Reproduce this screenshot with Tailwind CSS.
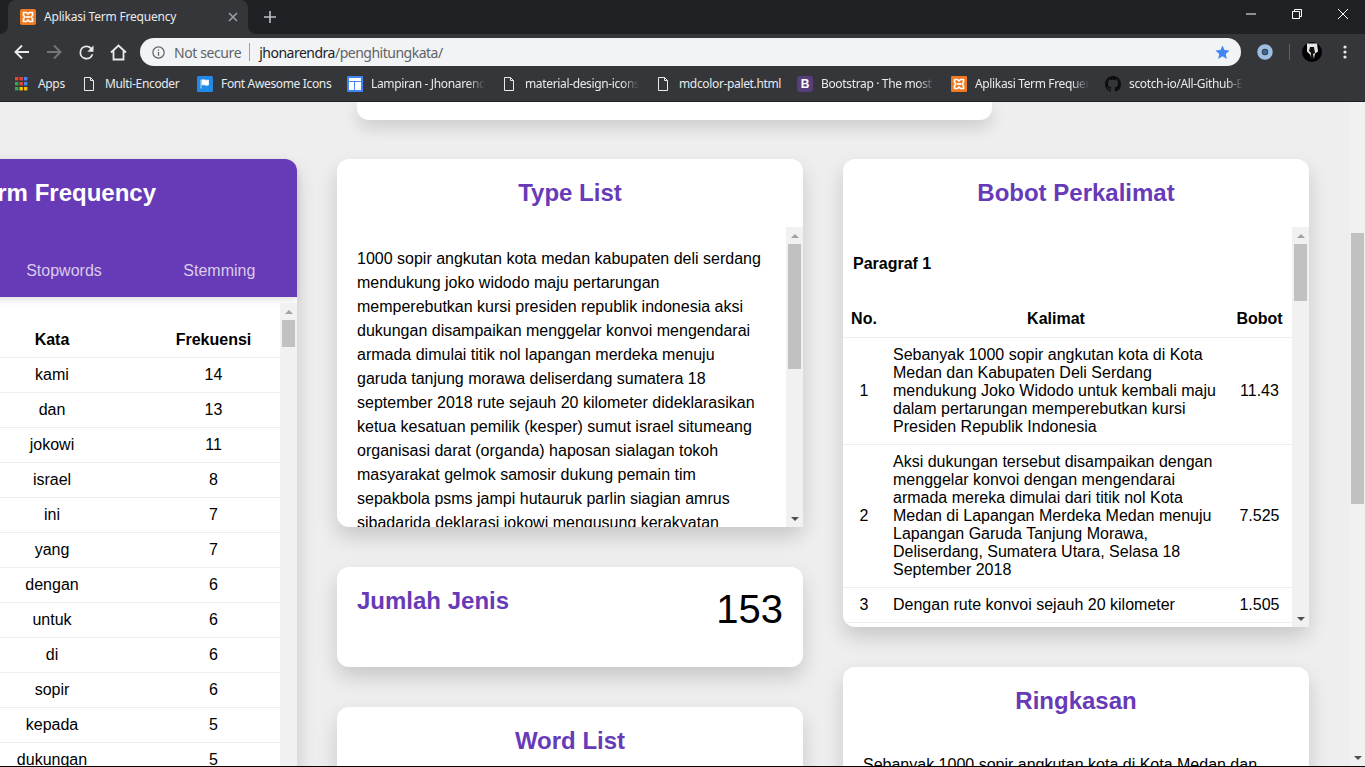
<!DOCTYPE html>
<html lang="en">

<head>
    <meta charset="UTF-8">
    <meta name="viewport" content="width=device-width, initial-scale=1.0">
    <title>Aplikasi Term Frequency</title>
    <script src="https://cdn.jsdelivr.net/npm/@tailwindcss/browser@4"></script>
</head>

<body class="h-[767px] overflow-hidden bg-[#eeeeee] font-['Liberation_Sans',sans-serif] text-black">

    <!-- Browser chrome -->
    <header class="h-[102px] bg-[#35363a] border-b border-[#202124] font-['Noto_Sans',sans-serif] text-[#e8eaed]">
        <!-- Tab strip -->
        <div class="h-[34px] bg-[#202124] flex items-stretch pl-2">
            <div class="relative w-[240px] bg-[#35363a] rounded-t-lg flex items-center pl-3 pr-2.5">
                <div class="absolute -left-2 bottom-0 w-2 h-2 bg-[#35363a]"><div class="w-2 h-2 bg-[#202124] rounded-br-lg"></div></div>
                <div class="absolute -right-2 bottom-0 w-2 h-2 bg-[#35363a]"><div class="w-2 h-2 bg-[#202124] rounded-bl-lg"></div></div>
                <svg class="w-4 h-4 shrink-0" viewBox="0 0 16 16"><rect width="16" height="16" rx="2" fill="#ef7a22"/><path d="M3.5 3.5h3L8 5l1.5-1.5h3v3L11 8l1.5 1.5v3h-3L8 11l-1.5 1.5h-3v-3L5 8 3.5 6.5z" fill="none" stroke="#fff" stroke-width="1.7" stroke-linejoin="round"/><path d="M6 8h4" stroke="#fff" stroke-width="1.7"/></svg>
                <span class="ml-2 text-[12px] tracking-[-0.2px] flex-1 whitespace-nowrap">Aplikasi Term Frequency</span>
                <svg class="w-2.5 h-2.5" viewBox="0 0 10 10"><path d="M1 1l8 8M9 1l-8 8" stroke="#9aa0a6" stroke-width="1.6"/></svg>
            </div>
            <div class="ml-4 flex items-center">
                <svg class="w-3 h-3" viewBox="0 0 12 12"><path d="M6 0v12M0 6h12" stroke="#bdc1c6" stroke-width="1.6"/></svg>
            </div>
            <div class="ml-auto flex">
                <div class="w-[46px] h-7 flex items-center justify-center"><svg class="w-2.5 h-2.5" viewBox="0 0 10 10"><path d="M0 5h10" stroke="#fff"/></svg></div>
                <div class="w-[46px] h-7 flex items-center justify-center"><svg class="w-2.5 h-2.5" viewBox="0 0 10 10"><path d="M.5 2.5h7v7h-7zM2.5 2.5v-2h7v7h-2" fill="none" stroke="#fff"/></svg></div>
                <div class="w-[45px] h-7 flex items-center justify-center"><svg class="w-2.5 h-2.5" viewBox="0 0 10 10"><path d="M0 0l10 10M10 0L0 10" stroke="#fff"/></svg></div>
            </div>
        </div>

        <!-- Toolbar -->
        <div class="h-8 pt-1 flex items-center pl-1.5">
            <div class="w-8 h-7 flex items-center justify-center"><svg class="w-4 h-4" viewBox="0 0 16 16"><path d="M15 8H2M8 1.5L1.5 8 8 14.5" fill="none" stroke="#e8eaed" stroke-width="1.9"/></svg></div>
            <div class="w-8 h-7 flex items-center justify-center"><svg class="w-4 h-4" viewBox="0 0 16 16"><path d="M1 8h13M8 1.5L14.5 8 8 14.5" fill="none" stroke="#74777a" stroke-width="1.9"/></svg></div>
            <div class="w-8 h-7 flex items-center justify-center"><svg class="w-[21px] h-[21px]" viewBox="0 0 24 24"><path d="M17.65 6.35A7.96 7.96 0 0 0 12 4a8 8 0 1 0 7.73 10h-2.08A6 6 0 1 1 12 6c1.66 0 3.14.69 4.22 1.78L13 11h7V4z" fill="#e8eaed"/></svg></div>
            <div class="w-8 h-7 flex items-center justify-center"><svg class="w-[17px] h-[17px]" viewBox="0 0 17 17"><path d="M1 8.5L8.500 1.500 16 8.500M3.500 7v8.500h10V7" fill="none" stroke="#e8eaed" stroke-width="1.8"/></svg></div>
            <div class="ml-1.5 flex-1 h-7 rounded-full bg-[#f1f3f4] flex items-center pl-[11px] pr-[10px] text-[14px]">
                <svg class="w-[15px] h-[15px] shrink-0" viewBox="0 0 24 24"><path d="M11 7h2v2h-2zm0 4h2v6h-2zm1-9a10 10 0 1 0 0 20 10 10 0 0 0 0-20zm0 18a8 8 0 1 1 0-16 8 8 0 0 1 0 16z" fill="#5f6368"/></svg>
                <span class="ml-[8px] text-[#5f6368] tracking-[-0.4px] whitespace-nowrap">Not secure</span>
                <span class="ml-[8px] w-px h-[18px] bg-[#9aa0a6]"></span>
                <span class="ml-[9px] text-[#202124] tracking-[-0.5px] whitespace-nowrap">jhonarendra<span class="text-[#5f6368]">/penghitungkata/</span></span>
                <svg class="ml-auto w-[17px] h-[17px]" viewBox="0 0 24 24"><path d="M12 17.27L18.18 21l-1.64-7.03L22 9.24l-7.19-.61L12 2 9.19 8.63 2 9.24l5.46 4.73L5.82 21z" fill="#4285f4"/></svg>
            </div>
            <div class="w-[124px] shrink-0 flex items-center pl-4">
                <svg class="w-4 h-4 shrink-0" viewBox="0 0 16 16"><circle cx="8" cy="8" r="5.500" fill="none" stroke="#9dc0e2" stroke-width="4.500"/><circle cx="8" cy="8" r="2.500" fill="#3f6490"/></svg>
                <span class="ml-4 w-px h-4 bg-[#5f6368]"></span>
                <svg class="ml-3 w-5 h-5 shrink-0" viewBox="0 0 20 20"><circle cx="10" cy="10" r="10" fill="#000"/><path d="M5 1.500h10l1 8-3 2-1 5H9l-1-4-3-3z" fill="#e6e6e6"/><path d="M8 5h4l1 6-2 1 1 5H8l1-6-2-2z" fill="#111"/></svg>
                <svg class="ml-[21px] w-1 h-4 shrink-0" viewBox="0 0 4 16"><circle cx="2" cy="3" r="1.600" fill="#e8eaed"/><circle cx="2" cy="8" r="1.600" fill="#e8eaed"/><circle cx="2" cy="13" r="1.600" fill="#e8eaed"/></svg>
            </div>
        </div>

        <!-- Bookmarks bar -->
        <div class="h-[35px] flex items-center pl-3.5 text-[12px] tracking-[-0.35px] whitespace-nowrap">
            <div class="w-[67px] flex items-center gap-2">
                <svg class="w-4 h-4 shrink-0" viewBox="0 0 16 16"><rect x="1" y="1" width="3.400" height="3.400" fill="#ea4335"/><rect x="5.500" y="1" width="3.400" height="3.400" fill="#ea4335"/><rect x="10" y="1" width="3.400" height="3.400" fill="#4285f4"/><rect x="1" y="6" width="3.400" height="3.400" fill="#34a853"/><rect x="5.500" y="6" width="3.400" height="3.400" fill="#ea4335"/><rect x="10" y="6" width="3.400" height="3.400" fill="#4285f4"/><rect x="1" y="11" width="3.400" height="3.400" fill="#34a853"/><rect x="5.500" y="11" width="3.400" height="3.400" fill="#fbbc05"/><rect x="10" y="11" width="3.400" height="3.400" fill="#fbbc05"/></svg>
                <span>Apps</span>
            </div>
            <div class="w-[116px] flex items-center gap-2">
                <svg class="w-4 h-4 shrink-0" viewBox="0 0 16 16"><path d="M3.500 1.500h6l3 3v10h-9zM9.500 1.500v3h3" fill="none" stroke="#e8eaed"/></svg>
                <span>Multi-Encoder</span>
            </div>
            <div class="w-[150px] flex items-center gap-2">
                <svg class="w-4 h-4 shrink-0" viewBox="0 0 16 16"><rect width="16" height="16" rx="1.500" fill="#228ae6"/><path d="M4 3.500v9M5 4c2-1 3 1 6.500 0v5c-3 1-4.500-1-6.500 0z" fill="#fff" stroke="#fff" stroke-width=".7"/></svg>
                <span>Font Awesome Icons</span>
            </div>
            <div class="w-[154px] flex items-center gap-2">
                <svg class="w-4 h-4 shrink-0" viewBox="0 0 16 16"><rect width="16" height="16" rx="1" fill="#4285f4"/><rect x="2" y="2" width="12" height="3" fill="#fff"/><rect x="2" y="6" width="5" height="8" fill="#fff"/><rect x="8" y="6" width="6" height="8" fill="#fff"/></svg>
                <span class="w-[114px] overflow-hidden [mask-image:linear-gradient(to_right,black_85%,transparent)]">Lampiran - Jhonarendra</span>
            </div>
            <div class="w-[154px] flex items-center gap-2">
                <svg class="w-4 h-4 shrink-0" viewBox="0 0 16 16"><path d="M3.500 1.500h6l3 3v10h-9zM9.500 1.500v3h3" fill="none" stroke="#e8eaed"/></svg>
                <span class="w-[114px] overflow-hidden [mask-image:linear-gradient(to_right,black_85%,transparent)]">material-design-icons</span>
            </div>
            <div class="w-[142px] flex items-center gap-2">
                <svg class="w-4 h-4 shrink-0" viewBox="0 0 16 16"><path d="M3.500 1.500h6l3 3v10h-9zM9.500 1.500v3h3" fill="none" stroke="#e8eaed"/></svg>
                <span>mdcolor-palet.html</span>
            </div>
            <div class="w-[154px] flex items-center gap-2">
                <span class="w-4 h-4 shrink-0 rounded-[3px] bg-[#563d7c] text-white text-[12px] leading-4 font-bold text-center font-['Liberation_Sans',sans-serif]">B</span>
                <span class="w-[114px] overflow-hidden [mask-image:linear-gradient(to_right,black_85%,transparent)]">Bootstrap · The most popular</span>
            </div>
            <div class="w-[154px] flex items-center gap-2">
                <svg class="w-4 h-4 shrink-0" viewBox="0 0 16 16"><rect width="16" height="16" rx="1" fill="#ef7a22"/><path d="M3.500 3.500h3L8 5l1.500-1.500h3v3L11 8l1.500 1.500v3h-3L8 11l-1.500 1.500h-3v-3L5 8 3.500 6.500z" fill="none" stroke="#fff" stroke-width="1.7" stroke-linejoin="round"/><path d="M6 8h4" stroke="#fff" stroke-width="1.7"/></svg>
                <span class="w-[114px] overflow-hidden [mask-image:linear-gradient(to_right,black_85%,transparent)]">Aplikasi Term Frequency</span>
            </div>
            <div class="flex items-center gap-2">
                <svg class="w-4 h-4 shrink-0" viewBox="0 0 16 16"><path fill="#0d0d0d" d="M8 0C3.580 0 0 3.580 0 8c0 3.540 2.290 6.530 5.470 7.590.4.070.55-.17.55-.38 0-.19-.01-.82-.01-1.490-2.010.37-2.530-.49-2.690-.94-.09-.23-.48-.94-.82-1.130-.28-.15-.68-.52-.01-.53.63-.01 1.080.58 1.230.82.720 1.210 1.870.87 2.330.66.070-.52.280-.87.510-1.070-1.780-.2-3.640-.89-3.640-3.950 0-.87.310-1.590.820-2.150-.08-.2-.36-1.020.08-2.120 0 0 .67-.21 2.200.82.640-.18 1.320-.27 2-.27s1.360.09 2 .27c1.530-1.040 2.200-.82 2.200-.82.440 1.100.160 1.920.080 2.120.51.560.820 1.270.820 2.150 0 3.070-1.870 3.750-3.650 3.950.29.250.54.730.54 1.480 0 1.070-.01 1.930-.01 2.200 0 .21.150.46.550.38A8.010 8.010 0 0 0 16 8c0-4.420-3.580-8-8-8z"/></svg>
                <span class="w-[114px] overflow-hidden [mask-image:linear-gradient(to_right,black_85%,transparent)]">scotch-io/All-Github-Emoji</span>
            </div>
        </div>
    </header>

    <!-- Page -->
    <div class="h-[664px] flex overflow-hidden">
        <main class="flex-1 overflow-hidden">
            <!-- Bottom of the card above -->
            <div class="ml-[357px] w-[635px] h-[18px] bg-white rounded-b-xl shadow-[0_8px_16px_rgba(0,0,0,0.14)]"></div>

            <div class="mt-[39px] ml-[-169px] flex gap-10 items-start">

                <!-- Term Frequency -->
                <section class="w-[466px] shrink-0 bg-white rounded-xl shadow-[0_10px_20px_rgba(0,0,0,0.16)]">
                    <div class="h-[138px] bg-[#673ab7] rounded-t-xl shadow-[0_3px_6px_rgba(0,0,0,0.12)] text-white flex flex-col">
                        <h2 class="pt-5 pr-[141px] text-right text-[24px] leading-7 font-bold">Aplikasi Term Frequency</h2>
                        <div class="mt-auto h-[54px] pt-[2px] grid grid-cols-3 items-center text-center text-white/75">
                            <span>Frekuensi</span>
                            <span>Stopwords</span>
                            <span>Stemming</span>
                        </div>
                    </div>
                    <div class="pt-1.5 flex h-[520px]">
                        <div class="w-[449px] overflow-hidden">
                            <table class="w-full table-fixed border-collapse text-center">
                                <colgroup><col class="w-[126px]"><col class="w-[190px]"><col class="w-[133px]"></colgroup>
                                <thead>
                                    <tr class="h-[54px] border-b border-[#eeeeee] font-bold"><th class="pt-5">No.</th><th class="pt-5">Kata</th><th class="pt-5">Frekuensi</th></tr>
                                </thead>
                                <tbody>
                                    <tr class="h-[35px] border-b border-[#eeeeee]"><td>1</td><td>kami</td><td>14</td></tr>
                                    <tr class="h-[35px] border-b border-[#eeeeee]"><td>2</td><td>dan</td><td>13</td></tr>
                                    <tr class="h-[35px] border-b border-[#eeeeee]"><td>3</td><td>jokowi</td><td>11</td></tr>
                                    <tr class="h-[35px] border-b border-[#eeeeee]"><td>4</td><td>israel</td><td>8</td></tr>
                                    <tr class="h-[35px] border-b border-[#eeeeee]"><td>5</td><td>ini</td><td>7</td></tr>
                                    <tr class="h-[35px] border-b border-[#eeeeee]"><td>6</td><td>yang</td><td>7</td></tr>
                                    <tr class="h-[35px] border-b border-[#eeeeee]"><td>7</td><td>dengan</td><td>6</td></tr>
                                    <tr class="h-[35px] border-b border-[#eeeeee]"><td>8</td><td>untuk</td><td>6</td></tr>
                                    <tr class="h-[35px] border-b border-[#eeeeee]"><td>9</td><td>di</td><td>6</td></tr>
                                    <tr class="h-[35px] border-b border-[#eeeeee]"><td>10</td><td>sopir</td><td>6</td></tr>
                                    <tr class="h-[35px] border-b border-[#eeeeee]"><td>11</td><td>kepada</td><td>5</td></tr>
                                    <tr class="h-[35px] border-b border-[#eeeeee]"><td>12</td><td>dukungan</td><td>5</td></tr>
                                </tbody>
                            </table>
                        </div>
                        <div class="w-[17px] bg-[#f1f1f1] flex flex-col">
                            <div class="h-[17px] flex items-center justify-center"><div class="border-x-[4px] border-x-transparent border-b-[4px] border-b-[#a3a3a3]"></div></div>
                            <div class="mx-0.5 h-[27px] bg-[#c1c1c1]"></div>
                        </div>
                    </div>
                </section>

                <!-- Middle column -->
                <div class="w-[466px] shrink-0 flex flex-col gap-10">
                    <section class="h-[368px] bg-white rounded-xl shadow-[0_10px_20px_rgba(0,0,0,0.16)] flex flex-col">
                        <h2 class="h-[68px] pt-5 text-center text-[24px] leading-7 font-bold text-[#673ab7]">Type List</h2>
                        <div class="h-[300px] flex">
                            <div class="flex-1 overflow-hidden rounded-bl-xl pt-5 px-5 leading-6">
                                1000 sopir angkutan kota medan kabupaten deli serdang mendukung joko widodo maju pertarungan memperebutkan kursi presiden republik indonesia aksi dukungan disampaikan menggelar konvoi mengendarai armada dimulai titik nol lapangan merdeka menuju garuda tanjung morawa deliserdang sumatera 18 september 2018 rute sejauh 20 kilometer dideklarasikan ketua kesatuan pemilik (kesper) sumut israel situmeang organisasi darat (organda) haposan sialagan tokoh masyarakat gelmok samosir dukung pemain tim sepakbola psms jampi hutauruk parlin siagian amrus sibadarida deklarasi jokowi mengusung kerakyatan
                            </div>
                            <div class="w-[17px] bg-[#f1f1f1] flex flex-col">
                                <div class="h-[17px] flex items-center justify-center"><div class="border-x-[4px] border-x-transparent border-b-[4px] border-b-[#a3a3a3]"></div></div>
                                <div class="mx-0.5 h-[125px] bg-[#c1c1c1]"></div>
                                <div class="mt-auto h-[17px] flex items-center justify-center"><div class="border-x-[4px] border-x-transparent border-t-[4px] border-t-[#505050]"></div></div>
                            </div>
                        </div>
                    </section>

                    <section class="h-[100px] bg-white rounded-xl shadow-[0_10px_20px_rgba(0,0,0,0.16)] flex justify-between px-5">
                        <h2 class="pt-5 text-[24px] leading-7 font-bold text-[#673ab7]">Jumlah Jenis</h2>
                        <span class="pt-[19px] text-[40px] leading-[46px]">153</span>
                    </section>

                    <section class="h-[300px] bg-white rounded-xl shadow-[0_10px_20px_rgba(0,0,0,0.16)]">
                        <h2 class="pt-5 text-center text-[24px] leading-7 font-bold text-[#673ab7]">Word List</h2>
                    </section>
                </div>

                <!-- Right column -->
                <div class="w-[466px] shrink-0 flex flex-col gap-10">
                    <section class="h-[468px] bg-white rounded-xl shadow-[0_10px_20px_rgba(0,0,0,0.16)] flex flex-col">
                        <h2 class="h-[68px] pt-5 text-center text-[24px] leading-7 font-bold text-[#673ab7]">Bobot Perkalimat</h2>
                        <div class="h-[400px] flex">
                            <div class="flex-1 overflow-hidden rounded-bl-xl">
                                <p class="pt-7 pl-2.5 leading-[18px] font-bold">Paragraf 1</p>
                                <table class="mt-[29px] w-full table-fixed border-collapse leading-[18px]">
                                    <colgroup><col class="w-[42px]"><col class="w-[342px]"><col class="w-[65px]"></colgroup>
                                    <thead>
                                        <tr class="h-[35px] border-b border-[#eeeeee] font-bold text-center"><th>No.</th><th>Kalimat</th><th>Bobot</th></tr>
                                    </thead>
                                    <tbody>
                                        <tr class="border-b border-[#eeeeee]"><td class="p-2 text-center">1</td><td class="p-2">Sebanyak 1000 sopir angkutan kota di Kota Medan dan Kabupaten Deli Serdang mendukung Joko Widodo untuk kembali maju dalam pertarungan memperebutkan kursi Presiden Republik Indonesia</td><td class="py-2 text-center">11.43</td></tr>
                                        <tr class="border-b border-[#eeeeee]"><td class="p-2 text-center">2</td><td class="p-2">Aksi dukungan tersebut disampaikan dengan menggelar konvoi dengan mengendarai armada mereka dimulai dari titik nol Kota Medan di Lapangan Merdeka Medan menuju Lapangan Garuda Tanjung Morawa, Deliserdang, Sumatera Utara, Selasa 18 September 2018</td><td class="py-2 text-center">7.525</td></tr>
                                        <tr class="border-b border-[#eeeeee]"><td class="p-2 text-center">3</td><td class="p-2">Dengan rute konvoi sejauh 20 kilometer</td><td class="py-2 text-center">1.505</td></tr>
                                    </tbody>
                                </table>
                            </div>
                            <div class="w-[17px] bg-[#f1f1f1] flex flex-col">
                                <div class="h-[17px] flex items-center justify-center"><div class="border-x-[4px] border-x-transparent border-b-[4px] border-b-[#a3a3a3]"></div></div>
                                <div class="mx-0.5 h-[57px] bg-[#c1c1c1]"></div>
                                <div class="mt-auto h-[17px] flex items-center justify-center"><div class="border-x-[4px] border-x-transparent border-t-[4px] border-t-[#505050]"></div></div>
                            </div>
                        </div>
                    </section>

                    <section class="h-[300px] bg-white rounded-xl shadow-[0_10px_20px_rgba(0,0,0,0.16)]">
                        <h2 class="h-[86px] pt-5 text-center text-[24px] leading-7 font-bold text-[#673ab7]">Ringkasan</h2>
                        <p class="px-5 leading-6">Sebanyak 1000 sopir angkutan kota di Kota Medan dan Kabupaten Deli Serdang mendukung Joko Widodo</p>
                    </section>
                </div>
            </div>
        </main>

        <!-- Page scrollbar -->
        <div class="w-[15px] shrink-0 bg-[#f1f1f1] flex flex-col">
            <div class="h-[131px]"></div>
            <div class="ml-px w-[13px] h-[271px] bg-[#c1c1c1]"></div>
            <div class="mt-auto h-[17px] flex items-center justify-center"><div class="border-x-[4px] border-x-transparent border-t-[4px] border-t-[#505050]"></div></div>
        </div>
    </div>
    <div class="h-px bg-black"></div>

</body>

</html>
